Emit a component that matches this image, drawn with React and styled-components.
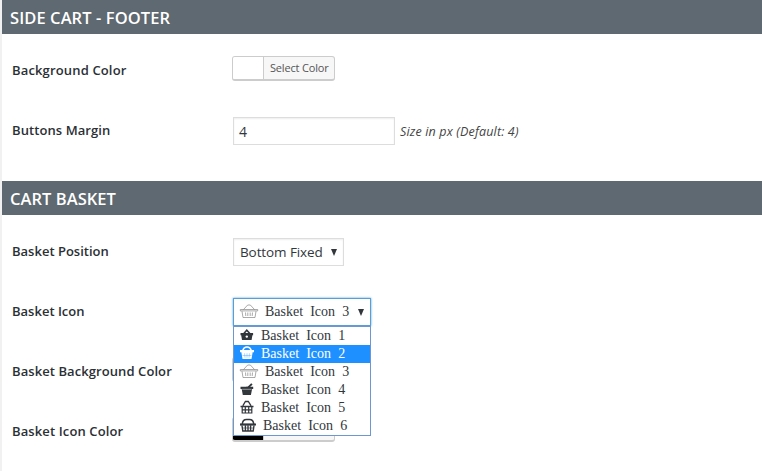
import React from "react";
import styled, { createGlobalStyle, css } from "styled-components";

const Global = createGlobalStyle`
  *, *::before, *::after { box-sizing: border-box; }
  body { margin: 0; background: #fff; overflow: hidden; }
`;

const Page = styled.main`
  height: 471px;
  border-left: 2px solid #f1f1f1;
  background: #fff;
  color: #32373c;
  font-family: "Open Sans", "Noto Sans", sans-serif;
  overflow: hidden;
`;

const Section = styled.section`
  padding-bottom: 21px;
`;

const Heading = styled.h2`
  margin: 0 0 6px;
  height: 34px;
  padding: 1px 8px 0;
  background: #5f6971;
  color: #fff;
  font-size: 16.5px;
  font-weight: 600;
  line-height: 34px;
  letter-spacing: ${(p) => p.$tracking}px;
  white-space: nowrap;
`;

const Row = styled.div`
  display: grid;
  grid-template-columns: 220px 1fr;
  height: 60px;
  padding-left: 10px;
  align-items: center;
`;

const Label = styled.label`
  color: #2b3035;
  font-size: 13px;
  font-weight: 600;
  line-height: 20px;
  letter-spacing: ${(p) => p.$tracking || 0}px;
  white-space: nowrap;
`;

const Field = styled.div`
  display: flex;
  align-items: center;
  padding-left: ${(p) => (p.$flush ? 0 : 1)}px;
  padding-top: ${(p) => p.$drop || 0}px;
  padding-bottom: ${(p) => (p.$flush ? 3 : 0)}px;
`;

const ColorButton = styled.button`
  display: flex;
  width: 103px;
  height: 25px;
  padding: 0;
  border: 1px solid #ccc;
  border-bottom-width: 2px;
  border-radius: 3px;
  background: #f7f7f7;
  overflow: hidden;
`;

const Swatch = styled.span`
  width: 31px;
  height: 22px;
  border-right: 1px solid #ccc;
  background: ${(p) => p.$color};
  flex: none;
`;

const ColorText = styled.span`
  padding-left: 6px;
  color: #555;
  font: 11px/22px "Open Sans", sans-serif;
  letter-spacing: -0.18px;
  white-space: nowrap;
`;

const Input = styled.input`
  width: 162px;
  height: 28px;
  padding: 0 5px;
  border: 1px solid #ddd;
  border-radius: 0;
  box-shadow: inset 0 1px 2px rgba(0, 0, 0, 0.07);
  background: #fff;
  color: #32373c;
  font: 14px "Open Sans", sans-serif;
`;

const Hint = styled.em`
  margin-left: 5px;
  padding-top: 1px;
  color: #444;
  font-size: 12.5px;
  line-height: 20px;
  letter-spacing: 0.16px;
  white-space: nowrap;
`;

const Select = styled.div`
  position: relative;
  display: flex;
  align-items: center;
  justify-content: space-between;
  width: ${(p) => p.$width}px;
  height: 28px;
  padding: 0 6px;
  border: 1px solid #ddd;
  box-shadow: inset 0 1px 2px rgba(0, 0, 0, 0.07);
  background: #fff;
  white-space: nowrap;
  ${(p) =>
    p.$open &&
    css`
      border-color: #5b9dd9;
      box-shadow: 0 0 2px rgba(30, 140, 190, 0.8);
    `}
`;

const SelectText = styled.span`
  font-size: 13.5px;
  letter-spacing: -0.1px;
`;

const Arrow = styled.svg`
  width: 6px;
  height: 7px;
  fill: #32373c;
  flex: none;
`;

const iconText = css`
  font-family: "Liberation Serif", "Times New Roman", serif;
  font-size: 14px;
  line-height: 18px;
  word-spacing: 3.6px;
  white-space: nowrap;
`;

const Choice = styled.span`
  display: flex;
  align-items: center;
  height: 18px;
  ${iconText}
`;

const Menu = styled.ul`
  position: absolute;
  z-index: 2;
  top: 27px;
  left: -1px;
  width: 138px;
  margin: 0;
  padding: 0;
  list-style: none;
  border: 1px solid #6f97cf;
  background: #fff;
`;

const Option = styled.li`
  display: flex;
  align-items: center;
  height: 18px;
  padding-left: 6px;
  color: ${(p) => (p.$active ? "#fff" : "#32373c")};
  background: ${(p) => (p.$active ? "#1e90ff" : "#fff")};
  ${iconText}
`;

const Glyph = styled.svg`
  display: block;
  height: 16px;
  margin: 0 ${(p) => p.$gap}px 2px 0;
  flex: none;
  overflow: visible;
`;

const icons = {
  1: {
    width: 14,
    gap: 7,
    art: (
      <g fill="currentColor">
        <path d="M.5 6h12.600v2.200h-.7L11.600 13H2L1.200 8.200H.5z" />
        <path d="M3.600 6.700 6.800 3.200 10 6.700" fill="none" stroke="currentColor" strokeWidth="1.600" />
        <circle cx="6.800" cy="9.600" r="1.200" fill="#fff" />
      </g>
    ),
  },
  2: {
    width: 14,
    gap: 7,
    art: (
      <g fill="currentColor">
        <path d="M0 5h14v2.300H0zM1.300 7h11.400L11.500 14h-9z" />
        <path d="M2.800 5.500C3.500 3 5 2 7 2s3.500 1 4.200 3.500" fill="none" stroke="currentColor" strokeWidth="1.500" />
        <path d="M4.500 8.300 5 12.700M7 8.300v4.400M9.500 8.300 9 12.700M2.500 10.500h9" fill="none" stroke="#1e90ff" strokeWidth=".35" />
      </g>
    ),
  },
  3: {
    width: 18,
    gap: 7,
    art: (
      <g fill="none" stroke="#858585" strokeWidth=".7">
        <path d="M.3 6.500h17.400v1.400H.3zM2 8.200l1 6.300h12L16 8.200" />
        <path d="M3.500 6.500 7.700 2h2.600l4.200 4.500" />
        <path d="m5.500 9.500.3 3.500M7.800 9.500V13M10.200 9.500V13M12.500 9.500l-.3 3.500" />
      </g>
    ),
  },
  4: {
    width: 14,
    gap: 7,
    art: (
      <g fill="currentColor">
        <path d="M.5 5.800h12.700V8H.5zM1.700 8h10.400L10.900 14H2.800z" />
        <path d="m6.300 6.600 2-.2 3.600-3.600" fill="none" stroke="currentColor" strokeWidth="1.900" />
        <path d="M2.200 8.300h9.400" stroke="#fff" strokeWidth=".5" />
      </g>
    ),
  },
  5: {
    width: 14,
    gap: 7,
    art: (
      <g fill="none" stroke="currentColor">
        <path d="M2.800 6.800 5.400 2.500h2.900l2.800 4.300" strokeWidth="1.300" />
        <path d="M.5 7.500h13" strokeWidth="1.500" />
        <path d="M2.200 8v6h9.600V8M5.300 8v6M8.700 8v6M2.500 10.900h9" strokeWidth="1.200" />
      </g>
    ),
  },
  6: {
    width: 16,
    gap: 7,
    art: (
      <g fill="none" stroke="currentColor">
        <path d="M2.300 7C2.500 4 4.300 2.500 6.500 2.500h3c2.200 0 4 1.500 4.200 4.500" strokeWidth="1.500" />
        <path d="M0 7.500h16" strokeWidth="2.200" />
        <path d="m2 8.500.8 5.500h10.400l.8-5.500M5.400 8.300V14M8 8.300V14M10.600 8.300V14" strokeWidth="1.400" />
        <path d="M2.500 11h11" strokeWidth=".6" />
      </g>
    ),
  },
};

function BasketIcon({ kind }) {
  const { width, gap, art } = icons[kind];
  return (
    <Glyph width={width} height="16" viewBox={`0 0 ${width} 16`} $gap={gap}>
      {art}
    </Glyph>
  );
}

function DownArrow() {
  return (
    <Arrow viewBox="0 0 6 7">
      <path d="M0 0h6L3 7z" />
    </Arrow>
  );
}

function ColorPicker({ color, text }) {
  return (
    <ColorButton type="button" aria-label="Select Color">
      <Swatch $color={color} />
      {text && <ColorText>{text}</ColorText>}
    </ColorButton>
  );
}

export default function App() {
  return (
    <>
      <Global />
      <Page>
        <Section>
          <Heading $tracking={0.08}>SIDE CART - FOOTER</Heading>
          <Row>
            <Label $tracking={0.15}>Background Color</Label>
            <Field $flush><ColorPicker color="#fff" text="Select Color" /></Field>
          </Row>
          <Row>
            <Label $tracking={0.08}>Buttons Margin</Label>
            <Field $drop={2}>
              <Input defaultValue="4" />
              <Hint>Size in px (Default: 4)</Hint>
            </Field>
          </Row>
        </Section>
        <Section>
          <Heading $tracking={0.05}>CART BASKET</Heading>
          <Row>
            <Label>Basket Position</Label>
            <Field $drop={2}>
              <Select $width={111}>
                <SelectText>Bottom Fixed</SelectText>
                <DownArrow />
              </Select>
            </Field>
          </Row>
          <Row>
            <Label>Basket Icon</Label>
            <Field $drop={2}>
              <Select $width={138} $open>
                <Choice><BasketIcon kind={3} />Basket Icon 3</Choice>
                <DownArrow />
                <Menu>
                  {[1, 2, 3, 4, 5, 6].map((n) => (
                    <Option key={n} $active={n === 2}>
                      <BasketIcon kind={n} />Basket Icon {n}
                    </Option>
                  ))}
                </Menu>
              </Select>
            </Field>
          </Row>
          <Row>
            <Label $tracking={0.08}>Basket Background Color</Label>
            <Field $flush><ColorPicker color="#fff" /></Field>
          </Row>
          <Row>
            <Label $tracking={0.12}>Basket Icon Color</Label>
            <Field $flush><ColorPicker color="#000" /></Field>
          </Row>
        </Section>
      </Page>
    </>
  );
}
